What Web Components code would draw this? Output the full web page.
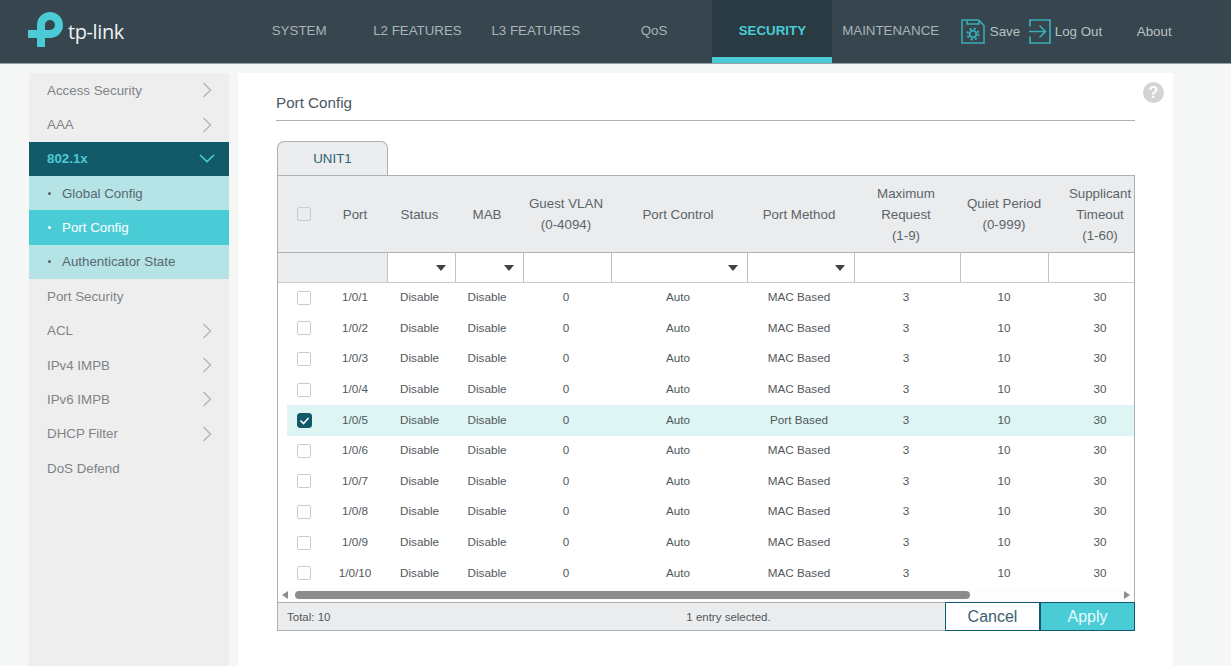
<!DOCTYPE html>
<html>
<head>
<meta charset="utf-8">
<title>Port Config</title>
<style>
html,body{margin:0;height:100%;overflow:hidden;}
body{background:#f5f6f6;font-family:"Liberation Sans",Arial,sans-serif;color:#4b5a62;}
#app{display:flex;flex-direction:column;height:666px;}
#content{display:flex;flex:1;min-height:0;padding:9px 58px 0 29px;gap:9px;}
</style>
</head>
<body>
<div id="app">
  <top-bar>
    <nav-item>SYSTEM</nav-item>
    <nav-item>L2 FEATURES</nav-item>
    <nav-item>L3 FEATURES</nav-item>
    <nav-item>QoS</nav-item>
    <nav-item active>SECURITY</nav-item>
    <nav-item>MAINTENANCE</nav-item>
  </top-bar>
  <div id="content">
    <side-menu>
      <side-item arrow>Access Security</side-item>
      <side-item arrow>AAA</side-item>
      <side-item open>802.1x</side-item>
      <side-sub>Global Config</side-sub>
      <side-sub active>Port Config</side-sub>
      <side-sub>Authenticator State</side-sub>
      <side-item>Port Security</side-item>
      <side-item arrow>ACL</side-item>
      <side-item arrow>IPv4 IMPB</side-item>
      <side-item arrow>IPv6 IMPB</side-item>
      <side-item arrow>DHCP Filter</side-item>
      <side-item>DoS Defend</side-item>
    </side-menu>
    <main-panel heading="Port Config">
      <port-table></port-table>
    </main-panel>
  </div>
</div>

<script>
class TopBar extends HTMLElement{
    constructor(){
        super();
        this.attachShadow({mode: 'open'});
    }

    connectedCallback(){
        this.shadowRoot.innerHTML = `
            <style>
                :host{display:flex;height:63px;background:#36454e;color:#b9c1c5;flex:none;border-bottom:1px solid #98a1a5;}
                .logo{width:240px;display:flex;align-items:center;padding-left:28px;box-sizing:border-box;gap:3px;}
                .logo svg{width:37px;height:38px;flex:none;margin-top:-1px;}
                .word{font:400 20px "Open Sans",sans-serif;color:#eef2f3;letter-spacing:-.4px;margin-top:-1px;}
                nav{display:flex;height:63px;}
                .tool{display:flex;align-items:center;font-size:13.33px;}
                .tool svg{flex:none;}
                .save{margin-left:11px;width:67px;gap:5px;}
                .out{width:109px;gap:4px;}
                .about{font-size:13.33px;display:flex;align-items:center;}
            </style>
            <div class="logo">
                <svg viewBox="0 0 37 38">
                    <path d="M0 22H22A9 9 0 1 0 13 13V35" fill="none" stroke="#4acbd6" stroke-width="8"/>
                </svg>
                <span class="word">tp-link</span>
            </div>
            <nav><slot></slot></nav>
            <div class="tool save">
                <svg width="24" height="25" viewBox="0 0 24 25" fill="none" stroke="#38aebb" stroke-width="1.500">
                    <path d="M1 1h16.500L23 6.500V24H1z"/>
                    <path d="M6 1v4h12V1.500"/>
                    <circle cx="12" cy="15" r="3.300" stroke-width="1.800"/>
                    <circle cx="12" cy="15" r="5.500" stroke-width="2" stroke-dasharray="2.160 2.160"/>
                </svg>
                <span>Save</span>
            </div>
            <div class="tool out">
                <svg width="23" height="25" viewBox="0 0 23 25" fill="none" stroke="#38aebb" stroke-width="1.700">
                    <path d="M2 7.500V1h20v23H2v-6.500"/>
                    <path d="M1 12.500h16.500M11.500 6.500l6 6-6 6"/>
                </svg>
                <span>Log Out</span>
            </div>
            <div class="about">About</div>
        `;
    }
}
window.customElements.define('top-bar', TopBar);

class NavItem extends HTMLElement{
    constructor(){
        super();
        this.attachShadow({mode: 'open'});
    }

    connectedCallback(){
        this.shadowRoot.innerHTML = `
            <style>
                :host{display:flex;align-items:center;justify-content:center;width:118.300px;font-size:13.33px;color:#aab3b8;box-sizing:border-box;padding-bottom:3px;}
                :host([active]){background:#2a3a43;color:#4acbd6;font-weight:700;border-bottom:6px solid #4acbd6;padding:3px 0 0;width:120px;margin:0 -.850px;}
            </style>
            <slot></slot>
        `;
    }
}
window.customElements.define('nav-item', NavItem);

class SideMenu extends HTMLElement{
    constructor(){
        super();
        this.attachShadow({mode: 'open'});
    }

    connectedCallback(){
        this.shadowRoot.innerHTML = `
            <style>
                :host{display:block;width:200px;flex:none;background:#eeeeef;}
            </style>
            <slot></slot>
        `;
    }
}
window.customElements.define('side-menu', SideMenu);

class SideItem extends HTMLElement{
    constructor(){
        super();
        this.attachShadow({mode: 'open'});
    }

    connectedCallback(){
        let icon = '';
        if(this.hasAttribute('arrow')){
            icon = `<svg width="10" height="16" viewBox="0 0 10 16" fill="none" stroke="#b4b8bb" stroke-width="1.500"><path d="M1.500 1l7 7-7 7"/></svg>`;
        }
        if(this.hasAttribute('open')){
            icon = `<svg width="16" height="9" viewBox="0 0 16 9" fill="none" stroke="#4acbd6" stroke-width="1.700"><path d="M1 1l7 6.500L15 1"/></svg>`;
        }
        this.shadowRoot.innerHTML = `
            <style>
                :host{display:flex;align-items:center;justify-content:space-between;height:34.360px;padding:0 17px 0 18px;font-size:13.33px;color:#7f8487;box-sizing:border-box;}
                :host([open]){background:#12596a;color:#4acbd6;font-weight:700;padding-right:14px;}
            </style>
            <span><slot></slot></span>${icon}
        `;
    }
}
window.customElements.define('side-item', SideItem);

class SideSub extends HTMLElement{
    constructor(){
        super();
        this.attachShadow({mode: 'open'});
    }

    connectedCallback(){
        this.shadowRoot.innerHTML = `
            <style>
                :host{display:flex;align-items:center;height:34.360px;padding-left:19px;font-size:13.33px;color:#56696f;background:#b6e3e6;box-sizing:border-box;}
                :host([active]){background:#4accd7;color:#fff;}
                i{width:3px;height:3px;border-radius:50%;background:currentColor;margin-right:11px;flex:none;}
            </style>
            <i></i><slot></slot>
        `;
    }
}
window.customElements.define('side-sub', SideSub);

class MainPanel extends HTMLElement{
    constructor(){
        super();
        this.attachShadow({mode: 'open'});
    }

    connectedCallback(){
        this.shadowRoot.innerHTML = `
            <style>
                :host{display:block;flex:1;background:#fff;padding:21px 38px 0 38px;position:relative;min-width:0;}
                h1{margin:0 0 20px;font:400 15.200px/18px "Liberation Sans",sans-serif;color:#4b5a62;height:26px;border-bottom:1px solid #aeb2b4;}
                .help{position:absolute;left:905px;top:9px;width:21px;height:21px;border-radius:50%;background:#d3d4d5;color:#fff;font:700 16px/21px "Liberation Sans",sans-serif;text-align:center;}
                .tab{width:111px;height:34px;margin-left:1px;box-sizing:border-box;border:1px solid #adb1b3;border-bottom:0;border-radius:7px 7px 0 0;background:#eaecee;color:#2f6474;font-size:13.33px;line-height:33px;text-align:center;}
                ::slotted(port-table){margin-left:1px;}
            </style>
            <span class="help">?</span>
            <h1>${this.getAttribute('heading')}</h1>
            <div class="tab">UNIT1</div>
            <slot></slot>
        `;
    }
}
window.customElements.define('main-panel', MainPanel);

class CheckBox extends HTMLElement{
    constructor(){
        super();
        this.attachShadow({mode: 'open'});
    }

    connectedCallback(){
        this.shadowRoot.innerHTML = `
            <style>
                :host{display:block;width:14px;height:14px;box-sizing:border-box;border:1px solid #c9cbcc;border-radius:2px;background:#fff;}
                :host([flat]){background:#eaecee;}
                :host([checked]){background:#12596a;border-color:#12596a;width:15px;height:15px;border-radius:3px;}
                svg{display:block;}
            </style>
            ${this.hasAttribute('checked') ? `<svg width="13" height="13" viewBox="0 0 13 13" fill="none" stroke="#fff" stroke-width="1.600"><path d="M2.500 6.500l3 3 5-5.500"/></svg>` : ''}
        `;
    }
}
window.customElements.define('check-box', CheckBox);

class PortRow extends HTMLElement{
    constructor(){
        super();
        this.attachShadow({mode: 'open'});
    }

    connectedCallback(){
        const cells = this.getAttribute('cells').split('|');
        const box = this.hasAttribute('selected') ? '<check-box checked></check-box>' : '<check-box></check-box>';
        this.shadowRoot.innerHTML = `
            <style>
                :host{display:grid;grid-template-columns:var(--cols);height:30.600px;align-items:center;font-size:11.700px;color:#52585c;}
                :host([selected]){background:#ddf5f3;}
                span{text-align:center;margin-bottom:3px;}
                .c{display:flex;justify-content:center;margin-bottom:1px;}
            </style>
            <div class="c">${box}</div>
            ${cells.map(c => `<span>${c}</span>`).join('')}
        `;
    }
}
window.customElements.define('port-row', PortRow);

class PortTable extends HTMLElement{
    constructor(){
        super();
        this.attachShadow({mode: 'open'});
    }

    connectedCallback(){
        const heads = ['Port', 'Status', 'MAB', 'Guest VLAN<br>(0-4094)', 'Port Control', 'Port Method', 'Maximum<br>Request<br>(1-9)', 'Quiet Period<br>(0-999)', 'Supplicant<br>Timeout<br>(1-60)'];
        let rows = '';
        for(let i = 1; i <= 10; i++){
            const sel = i == 5;
            rows += `<port-row ${sel ? 'selected' : ''} cells="1/0/${i}|Disable|Disable|0|Auto|${sel ? 'Port Based' : 'MAC Based'}|3|10|30"></port-row>`;
        }
        const arrow = '<svg width="10" height="6" viewBox="0 0 10 6"><path d="M0 0h10L5 6z" fill="#3c4247"/></svg>';
        this.shadowRoot.innerHTML = `
            <style>
                :host{display:block;--cols:34px 68px 61px 74px 84px 140px 102px 112px 84px 108px;width:858px;box-sizing:border-box;border:1px solid #adb1b3;font-size:13.33px;color:#5d6468;}
                .clip{overflow:hidden;}
                .head{display:grid;grid-template-columns:var(--cols);height:76px;background:#eaecee;padding-left:9px;align-items:center;text-align:center;line-height:21px;width:867px;border-bottom:1px solid #adb1b3;}
                .head check-box{margin:auto;}
                .filter{display:grid;grid-template-columns:109px 68px 68px 88px 136px 107px 106px 88px 104px;height:29px;background:#fff;width:875px;border-bottom:1px solid #c7cacb;}
                .filter div{border-left:1px solid #bfc3c5;display:flex;align-items:center;justify-content:flex-end;padding-right:9px;box-sizing:border-box;}
                .filter div:first-child{background:#eaecee;border-left:0;}
                .rows{padding-left:9px;width:867px;}
                .bar{display:flex;align-items:center;height:13px;padding:0 4px;background:#fdfdfd;}
                .track{flex:1;height:8px;padding-left:7px;}
                .thumb{width:675px;height:8px;border-radius:4px;background:#8b8c8d;}
                .foot{display:flex;align-items:stretch;height:27px;background:#eaecee;border-top:1px solid #adb1b3;font-size:11.500px;color:#52585c;}
                .total{width:120px;padding-left:9px;line-height:28px;}
                .sel{flex:1;text-align:center;line-height:28px;padding-left:105px;}
                .btn{width:95px;height:29px;margin:-1px 0;font-size:16px;line-height:28px;text-align:center;border:1px solid #12596a;box-sizing:border-box;}
                .cancel{background:#fff;color:#3b6070;}
                .apply{background:#4accd7;color:#e8fbfc;margin-right:-1px;}
            </style>
            <div class="clip">
                <div class="head">
                    <check-box flat></check-box>
                    ${heads.map(h => `<span>${h}</span>`).join('')}
                </div>
                <div class="filter">
                    <div></div><div>${arrow}</div><div>${arrow}</div><div></div><div>${arrow}</div><div>${arrow}</div><div></div><div></div><div></div>
                </div>
                <div class="rows">${rows}</div>
            </div>
            <div class="bar">
                <svg width="6" height="8" viewBox="0 0 6 8"><path d="M6 0v8L0 4z" fill="#8b8c8d"/></svg>
                <div class="track"><div class="thumb"></div></div>
                <svg width="6" height="8" viewBox="0 0 6 8"><path d="M0 0v8l6-4z" fill="#8b8c8d"/></svg>
            </div>
            <div class="foot">
                <div class="total">Total: 10</div>
                <div class="sel">1 entry selected.</div>
                <div class="btn cancel">Cancel</div>
                <div class="btn apply">Apply</div>
            </div>
        `;
    }
}
window.customElements.define('port-table', PortTable);
</script>
</body>
</html>
